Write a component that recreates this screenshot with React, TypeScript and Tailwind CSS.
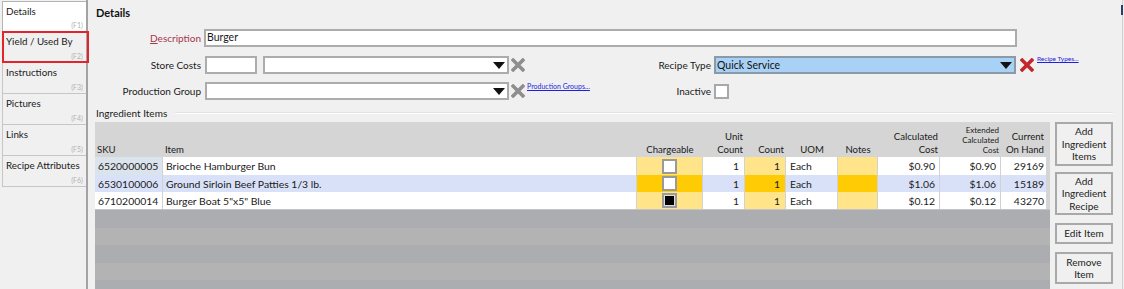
import React from "react";

const XIcon = ({ color }: { color: string }) => (
  <svg width="14" height="14" viewBox="0 0 14 14" className="shrink-0">
    <path d="M2.2 2.2L11.8 11.8M11.8 2.2L2.2 11.8" stroke={color} strokeWidth="3.6" strokeLinecap="square" />
  </svg>
);

const Tri = () => (
  <svg width="12" height="7" viewBox="0 0 12 7" className="shrink-0">
    <polygon points="0,0 12,0 6,7" fill="#111" />
  </svg>
);

const Select = ({ w, value, blue }: { w: string; value?: string; blue?: boolean }) => (
  <div
    className={`${w} h-[18px] border-2 ${blue ? "bg-[#a9d1f5] border-[#8a9aa8]" : "bg-white border-[#acacac]"} flex items-center justify-between pl-[1px] pr-[2px]`}
  >
    <span className="text-[10.5px] leading-[12px] text-[#111]">{value}</span>
    <Tri />
  </div>
);

const tabs = [
  { name: "Details", key: "(F1)" },
  { name: "Yield / Used By", key: "(F2)" },
  { name: "Instructions", key: "(F3)" },
  { name: "Pictures", key: "(F4)" },
  { name: "Links", key: "(F5)" },
  { name: "Recipe Attributes", key: "(F6)" },
];

const cols = [
  { w: "w-[68px]", label: ["SKU"], align: "left" },
  { w: "w-[474px]", label: ["Item"], align: "left" },
  { w: "w-[66px]", label: ["Chargeable"], align: "center", yellow: true },
  { w: "w-[42px]", label: ["Unit", "Count"], align: "right" },
  { w: "w-[41px]", label: ["Count"], align: "right", yellow: true },
  { w: "w-[52px]", label: ["UOM"], align: "center" },
  { w: "w-[40px]", label: ["Notes"], align: "center", yellow: true },
  { w: "w-[62px]", label: ["Calculated", "Cost"], align: "right" },
  { w: "w-[61px]", label: ["Extended", "Calculated", "Cost"], align: "right", small: true },
  { w: "w-[45px]", label: ["Current", "On Hand"], align: "right" },
];

const rows = [
  { sku: "6520000005", item: "Brioche Hamburger Bun", checked: false, calc: "$0.90", ext: "$0.90", onHand: "29169", h: "h-[18px]", sel: false },
  { sku: "6530100006", item: "Ground Sirloin Beef Patties 1/3 lb.", checked: false, calc: "$1.06", ext: "$1.06", onHand: "15189", h: "h-[17px]", sel: true },
  { sku: "6710200014", item: "Burger Boat 5\"x5\" Blue", checked: true, calc: "$0.12", ext: "$0.12", onHand: "43270", h: "h-[18px]", sel: false },
];

const Btn = ({ lines, h }: { lines: string[]; h: string }) => (
  <div className={`${h} w-[58px] border-2 border-[#a9a9a9] bg-[#f0f0f0] flex flex-col items-center justify-center text-[10px] leading-[12.5px] text-[#222]`}>
    {lines.map((l) => (
      <span key={l}>{l}</span>
    ))}
  </div>
);

export default function App() {
  return (
    <div className="w-[1124px] h-[289px] overflow-hidden bg-[#f0f0f0] flex font-['Lato','Noto_Sans',sans-serif] text-[#1a1a1a]">
      {/* Sidebar */}
      <div className="w-[86px] shrink-0 flex flex-col pt-[1px]">
        {tabs.map((t, i) => (
          <div
            key={t.name}
            className={`relative h-[31px] ml-[2px] flex flex-col justify-between px-[3px] border-l border-b ${
              i === 0 ? "bg-white border-t border-[#b4b4b4]" : "border-[#c6c6c6]"
            }`}
          >
            <span className="text-[9.8px] leading-[13px] pt-[3px] whitespace-nowrap">{t.name}</span>
            <span className="self-end text-[7px] leading-[9px] text-[#b3b3b3] pb-[1px]">{t.key}</span>
            {i === 1 && <div className="absolute left-[-1px] right-[-3px] top-[-1px] bottom-[-1px] border-2 border-[#e3242b] pointer-events-none" />}
          </div>
        ))}
      </div>
      <div className="w-[2px] shrink-0 bg-[#a3a3a3]" />

      {/* Main */}
      <div className="flex-1 flex flex-col pl-[7px] pr-[8px]">
        <div className="h-[27px] flex items-center pl-[1px] text-[11px] font-bold text-[#111]">Details</div>

        {/* Description */}
        <div className="mt-[2px] flex items-center h-[18px]">
          <div className="w-[106px] text-right text-[10px] text-[#a8344f]">
            <span className="underline">D</span>escription
          </div>
          <div className="ml-[3px] w-[813px] h-[18px] border-2 border-[#acacac] bg-white flex items-center pl-[1px] text-[10.5px]">Burger</div>
        </div>

        {/* Store costs / Recipe type */}
        <div className="mt-[9px] flex items-center h-[18px]">
          <div className="w-[505px] flex items-center">
            <div className="w-[106px] text-right text-[10px]">Store Costs</div>
            <div className="ml-[4px] w-[52px] h-[18px] border-2 border-[#acacac] bg-white" />
            <div className="ml-[6px]">
              <Select w="w-[246px]" />
            </div>
            <div className="ml-[2px]">
              <XIcon color="#8e8e8e" />
            </div>
          </div>
          <div className="w-[111px] text-right text-[10px]">Recipe Type</div>
          <div className="ml-[3px]">
            <Select w="w-[302px]" value="Quick Service" blue />
          </div>
          <div className="ml-[4px]">
            <XIcon color="#c1272d" />
          </div>
          <a className="ml-[3px] self-start mt-[-2px] text-[6.5px] leading-[9px] text-[#1f1fe0] underline">Recipe Types...</a>
        </div>

        {/* Production group / Inactive */}
        <div className="mt-[8px] flex items-center h-[18px]">
          <div className="w-[505px] flex items-center">
            <div className="w-[106px] text-right text-[10px]">Production Group</div>
            <div className="ml-[4px]">
              <Select w="w-[304px]" />
            </div>
            <div className="ml-[2px]">
              <XIcon color="#8e8e8e" />
            </div>
            <a className="ml-[2px] self-start mt-[-1px] text-[7px] leading-[10px] text-[#1f1fe0] underline whitespace-nowrap">Production Groups...</a>
          </div>
          <div className="w-[111px] text-right text-[10px]">Inactive</div>
          <div className="ml-[3px] w-[15px] h-[15px] border-2 border-[#a8a8a8] bg-white" />
        </div>

        {/* Ingredient Items */}
        <div className="h-[22px] pt-[4px] flex items-center">
          <span className="pl-[1px] text-[10px] whitespace-nowrap">Ingredient Items</span>
          <div className="ml-[8px] flex-1 h-[2px] border-t border-[#e4e4e4] bg-white" />
        </div>

        {/* Table + buttons */}
        <div className="flex-1 flex gap-[5px] min-h-0">
          <div className="w-[955px] shrink-0 flex flex-col bg-[#d5d5d5] overflow-hidden">
            {/* header */}
            <div className="h-[35px] flex shrink-0">
              {cols.map((c) => (
                <div
                  key={c.label.join(" ")}
                  className={`${c.w} shrink-0 flex flex-col justify-end pb-[1px] ${
                    c.small ? "text-[8px] leading-[10px] pb-[2px]" : "text-[9.6px] leading-[12.5px]"
                  } ${c.align === "left" ? "items-start pl-[2px]" : c.align === "center" ? "items-center" : "items-end pr-[2px]"}`}
                >
                  {c.label.map((l) => (
                    <span key={l} className="whitespace-nowrap">{l}</span>
                  ))}
                </div>
              ))}
            </div>
            {/* rows */}
            {rows.map((r, ri) => {
              const base = r.sel ? "bg-[#d9e1f8]" : "bg-white";
              const yel = r.sel ? "bg-[#ffcb05]" : "bg-[#ffe48a]";
              const cell = "shrink-0 flex items-center border-r border-[#d2d2d2] text-[10.4px] leading-[12px]";
              return (
                <div key={r.sku} className={`${r.h} flex shrink-0 ${ri === 2 ? "border-b border-[#c4c4c4]" : ""}`}>
                  <div className={`${cell} w-[68px] pl-[3px] ${r.sel ? "bg-[#d9e1f8]" : ri === 0 ? "bg-[#dbe3ec]" : "bg-white"}`}>{r.sku}</div>
                  <div className={`${cell} w-[474px] pl-[3px] ${base}`}>{r.item}</div>
                  <div className={`${cell} w-[66px] justify-center ${yel}`}>
                    {r.checked ? (
                      <div className="w-[15px] h-[15px] border-2 border-[#9a9a9a] bg-[#dedede] p-[1px]">
                        <div className="w-full h-full bg-black" />
                      </div>
                    ) : (
                      <div className="w-[15px] h-[15px] border-2 border-[#9a9a9a] bg-white" />
                    )}
                  </div>
                  <div className={`${cell} w-[42px] justify-end pr-[5px] ${base}`}>1</div>
                  <div className={`${cell} w-[41px] justify-end pr-[5px] ${yel}`}>1</div>
                  <div className={`${cell} w-[52px] pl-[4px] ${base}`}>Each</div>
                  <div className={`${cell} w-[40px] ${yel}`} />
                  <div className={`${cell} w-[62px] justify-end pr-[4px] ${base}`}>{r.calc}</div>
                  <div className={`${cell} w-[61px] justify-end pr-[4px] ${base}`}>{r.ext}</div>
                  <div className={`${cell} w-[45px] justify-end pr-[2px] ${base} border-r-0`}>{r.onHand}</div>
                  <div className="w-[4px] shrink-0 bg-[#d5d5d5]" />
                </div>
              );
            })}
            {/* empty bands */}
            <div className="h-[18px] shrink-0 bg-[#acadb0]" />
            <div className="h-[17px] shrink-0 bg-[#b3b3b3]" />
            <div className="h-[18px] shrink-0 bg-[#acadb0]" />
            <div className="h-[17px] shrink-0 bg-[#b3b3b3]" />
            <div className="h-[18px] shrink-0 bg-[#acadb0]" />
          </div>
          <div className="w-[58px] shrink-0 flex flex-col">
            <Btn h="h-[44px]" lines={["Add", "Ingredient", "Items"]} />
            <div className="h-[6px]" />
            <Btn h="h-[43px]" lines={["Add", "Ingredient", "Recipe"]} />
            <div className="h-[8px]" />
            <Btn h="h-[21px]" lines={["Edit Item"]} />
            <div className="h-[8px]" />
            <Btn h="h-[32px]" lines={["Remove", "Item"]} />
          </div>
        </div>
      </div>

      {/* Right edge */}
      <div className="w-[3px] shrink-0 flex flex-col">
        <div className="ml-[1px] w-[1px] h-[5px] bg-[#d0d0d0]" />
        <div className="ml-[0px] w-[2px] h-[10px] bg-[#2c3e63]" />
        <div className="ml-[1px] w-[1px] flex-1 bg-[#d0d0d0]" />
      </div>
    </div>
  );
}
